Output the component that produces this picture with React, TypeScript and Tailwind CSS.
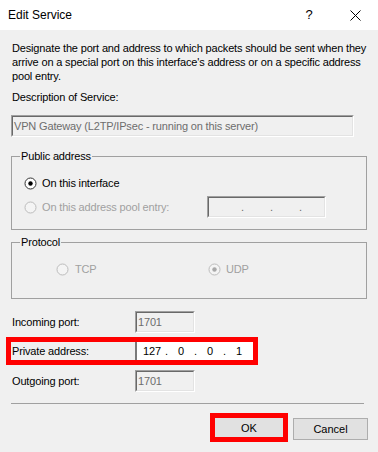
import React from "react";

type RadioProps = { checked?: boolean; disabled?: boolean };

const Radio = ({ checked, disabled }: RadioProps) => (
  <svg width="13" height="13" viewBox="0 0 13 13" className="shrink-0">
    <circle
      cx="6.5"
      cy="6.5"
      r="5.5"
      fill={disabled ? "#f4f4f4" : "#ffffff"}
      stroke={disabled ? "#bcbcbc" : "#333333"}
      strokeWidth="1"
    />
    {checked && (
      <circle cx="6.5" cy="6.5" r="2.2" fill={disabled ? "#a8a8a8" : "#000000"} />
    )}
  </svg>
);

// sunken edit box, classic windows style
const EditBox = ({
  className,
  children,
}: {
  className: string;
  children?: React.ReactNode;
}) => (
  <div
    className={`border border-t-[#a0a0a0] border-l-[#a0a0a0] border-b-white border-r-white ${className}`}
  >
    <div className="h-full border border-t-[#696969] border-l-[#696969] border-b-[#e3e3e3] border-r-[#e3e3e3] flex items-center pl-px text-[#6d6d6d] whitespace-nowrap">
      {children}
    </div>
  </div>
);

const IpFields = ({ values, pad }: { values: string[]; pad: string }) => (
  <div className={`flex items-center ${pad}`}>
    {values.map((v, i) => (
      <React.Fragment key={i}>
        <span className="w-[26px] text-center">{v}</span>
        {i < 3 && <span className="w-[3px] text-center">.</span>}
      </React.Fragment>
    ))}
  </div>
);

export default function App() {
  return (
    <div className="w-[378px] h-[452px] bg-[#f0f0f0] overflow-hidden font-['Liberation_Sans',Arial,sans-serif] text-[11px] leading-[14px] tracking-[-0.16px] text-black">
      {/* title bar */}
      <div className="h-[30px] bg-white flex items-center text-[12px] tracking-normal">
        <span className="pl-2">Edit Service</span>
        <div className="ml-auto flex">
          <div className="w-[46px] h-[30px] flex items-center justify-center text-[13px]">?</div>
          <div className="w-[46px] h-[30px] flex items-center justify-center">
            <svg width="11" height="11" viewBox="0 0 11 11">
              <path d="M0.5 0.5 L10.5 10.5 M10.5 0.5 L0.5 10.5" stroke="#000" strokeWidth="1" />
            </svg>
          </div>
        </div>
      </div>

      <div className="px-[11px] pt-[11px]">
        <div className="pl-px whitespace-nowrap">
          <div>Designate the port and address to which packets should be sent when they</div>
          <div>arrive on a special port on this interface's address or on a specific address</div>
          <div>pool entry.</div>
        </div>

        <div className="mt-[7px] pl-px">Description of Service:</div>
        <EditBox className="mt-[11px] w-[343px] h-[22px]">
          VPN Gateway (L2TP/IPsec - running on this server)
        </EditBox>

        <fieldset className="mt-[12px] border border-[#a0a0a0] pl-[12px] pb-[11px]">
          <legend className="ml-[-4px] px-px">Public address</legend>
          <div className="mt-[13px] flex items-center h-[14px]">
            <Radio checked />
            <span className="ml-[5px]">On this interface</span>
          </div>
          <div className="mt-[6px] flex items-center h-[22px]">
            <Radio disabled />
            <span className="ml-[5px] w-[165px] text-[#a0a0a0]">On this address pool entry:</span>
            <EditBox className="w-[119px] h-[22px]">
              <IpFields values={["", "", "", ""]} pad="pl-[5px]" />
            </EditBox>
          </div>
        </fieldset>

        <fieldset className="mt-[5px] border border-[#a0a0a0] pl-[44px] pb-[22px]">
          <legend className="ml-[-36px] px-px">Protocol</legend>
          <div className="mt-[13px] flex items-center h-[14px] text-[#a0a0a0]">
            <div className="w-[152px] flex items-center">
              <Radio disabled />
              <span className="ml-[6px]">TCP</span>
            </div>
            <Radio checked disabled />
            <span className="ml-[5px]">UDP</span>
          </div>
        </fieldset>

        <div className="mt-[12px] flex items-center h-[22px]">
          <span className="w-[124px] pl-px">Incoming port:</span>
          <EditBox className="w-[60px] h-[22px]">1701</EditBox>
        </div>

        <div className="mt-[4px] ml-[-5px] w-[252px] h-[28px] border-[5px] border-[#ff0000] flex items-center">
          <span className="w-[124px] pl-px">Private address:</span>
          <div className="h-full flex-1 bg-white border-l-2 border-l-[#7a7a7a]">
            <div className="h-full flex items-center text-black">
              <IpFields values={["127", "0", "0", "1"]} pad="pl-[2px]" />
            </div>
          </div>
        </div>

        <div className="mt-[5px] flex items-center h-[22px]">
          <span className="w-[124px] pl-px">Outgoing port:</span>
          <EditBox className="w-[60px] h-[22px]">1701</EditBox>
        </div>

        <div className="mt-[11px] w-[353px] h-px bg-[#a0a0a0]" />

        <div className="mt-[9px] mr-[-1px] flex justify-end items-start gap-[5px] tracking-normal">
          <div className="w-[78px] h-[29px] border-[5px] border-[#ff0000] bg-[#e1e1e1] flex items-center justify-center">
            OK
          </div>
          <div className="mt-[5px] w-[75px] h-[22px] border border-[#adadad] bg-[#e1e1e1] flex items-center justify-center">
            Cancel
          </div>
        </div>
      </div>
    </div>
  );
}
